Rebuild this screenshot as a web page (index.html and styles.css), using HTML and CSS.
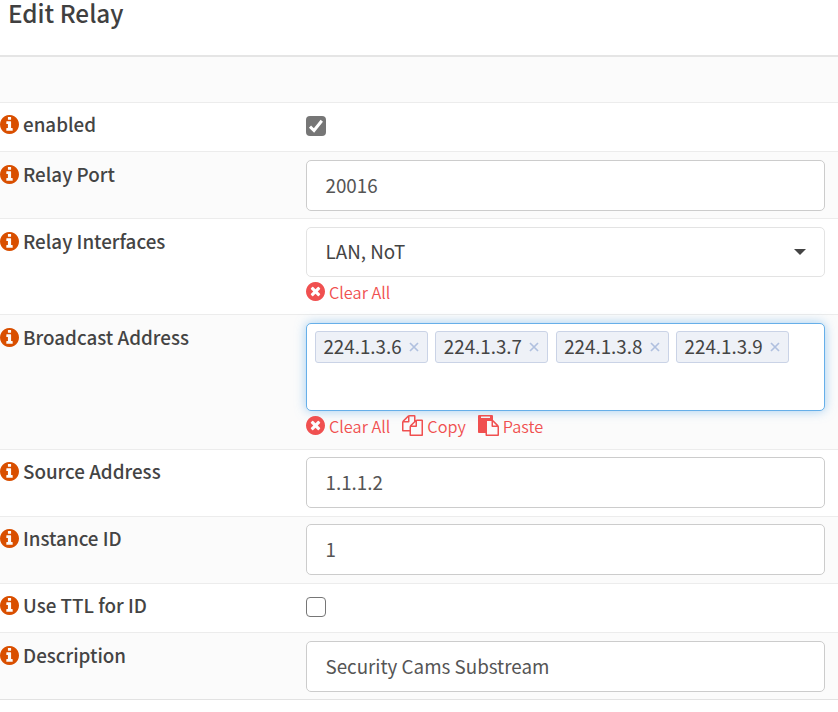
FILE: index.html
```html
<!DOCTYPE html>
<html lang="en">
<head>
<meta charset="utf-8">
<title>Edit Relay</title>
<link rel="stylesheet" href="styles.css">
</head>
<body>
<svg class="defs" aria-hidden="true">
  <symbol id="info" viewBox="128 128 1536 1536"><path d="M1152 1376v-160q0-14-9-23t-23-9h-96v-512q0-14-9-23t-23-9h-320q-14 0-23 9t-9 23v160q0 14 9 23t23 9h96v320h-96q-14 0-23 9t-9 23v160q0 14 9 23t23 9h448q14 0 23-9t9-23zm-128-896v-160q0-14-9-23t-23-9h-192q-14 0-23 9t-9 23v160q0 14 9 23t23 9h192q14 0 23-9t9-23zm640 416q0 209-103 385.500t-279.500 279.500-385.500 103-385.500-103-279.500-279.500-103-385.500 103-385.500 279.500-279.500 385.500-103 385.500 103 279.500 279.500 103 385.500z"/></symbol>
  <symbol id="clear" viewBox="128 128 1536 1536"><path d="M1277 1122q0-26-19-45l-181-181 181-181q19-19 19-45 0-27-19-46l-90-90q-19-19-46-19-26 0-45 19l-181 181-181-181q-19-19-45-19-27 0-46 19l-90 90q-19 19-19 46 0 26 19 45l181 181-181 181q-19 19-19 45 0 27 19 46l90 90q19 19 46 19 26 0 45-19l181-181 181 181q19 19 45 19 27 0 46-19l90-90q19-19 19-46zm387-226q0 209-103 385.500t-279.500 279.500-385.500 103-385.500-103-279.500-279.500-103-385.500 103-385.500 279.500-279.500 385.500-103 385.500 103 279.500 279.500 103 385.500z"/></symbol>
  <symbol id="copy" viewBox="0 0 1792 1792"><path d="M1696 384q40 0 68 28t28 68v1216q0 40-28 68t-68 28h-960q-40 0-68-28t-28-68v-288h-544q-40 0-68-28t-28-68v-672q0-40 20-88t48-76l408-408q28-28 76-48t88-20h416q40 0 68 28t28 68v328q68-40 128-40h416zm-544 213l-299 299h299v-299zm-640-384l-299 299h299v-299zm196 647l316-316v-416h-384v416q0 40-28 68t-68 28h-416v640h512v-256q0-40 20-88t48-76zm956 804v-1152h-384v416q0 40-28 68t-68 28h-416v640h896z"/></symbol>
  <symbol id="paste" viewBox="0 0 1792 1792"><path d="M768 1664h896v-640h-416q-40 0-68-28t-28-68v-416h-384v1152zm256-1440v-64q0-13-9.500-22.500t-22.500-9.500h-704q-13 0-22.500 9.500t-9.500 22.500v64q0 13 9.500 22.500t22.500 9.500h704q13 0 22.500-9.500t9.500-22.500zm256 672h299l-299-299v299zm512 128v672q0 40-28 68t-68 28h-960q-40 0-68-28t-28-68v-160h-544q-40 0-68-28t-28-68v-1344q0-40 28-68t68-28h1088q40 0 68 28t28 68v328q21 13 36 28l408 408q28 28 48 76t20 88z"/></symbol>
</svg>

<header class="header"><h1 class="title">Edit Relay</h1></header>

<main class="form">
  <div class="row row-spacer"></div>

  <div class="row row-check">
    <div class="label"><svg class="info"><use href="#info"/></svg><span>enabled</span></div>
    <div class="field"><span class="check checked"><svg viewBox="0 0 20 20"><path d="M4 10.600 8 14.500 15.800 4.700"/></svg></span></div>
  </div>

  <div class="row row-input">
    <div class="label"><svg class="info"><use href="#info"/></svg><span>Relay Port</span></div>
    <div class="field"><div class="input">20016</div></div>
  </div>

  <div class="row row-select">
    <div class="label"><svg class="info"><use href="#info"/></svg><span>Relay Interfaces</span></div>
    <div class="field">
      <div class="input select"><span>LAN, NoT</span><i class="caret"></i></div>
      <div class="links"><a class="link"><svg class="circle"><use href="#clear"/></svg><span>Clear All</span></a></div>
    </div>
  </div>

  <div class="row row-tags">
    <div class="label"><svg class="info"><use href="#info"/></svg><span>Broadcast Address</span></div>
    <div class="field">
      <div class="tags">
        <div class="tag"><span>224.1.3.6</span><svg class="x" viewBox="0 0 10 10"><path d="M1 1 9 9M9 1 1 9"/></svg></div>
        <div class="tag"><span>224.1.3.7</span><svg class="x" viewBox="0 0 10 10"><path d="M1 1 9 9M9 1 1 9"/></svg></div>
        <div class="tag"><span>224.1.3.8</span><svg class="x" viewBox="0 0 10 10"><path d="M1 1 9 9M9 1 1 9"/></svg></div>
        <div class="tag"><span>224.1.3.9</span><svg class="x" viewBox="0 0 10 10"><path d="M1 1 9 9M9 1 1 9"/></svg></div>
      </div>
      <div class="links">
        <a class="link"><svg class="circle"><use href="#clear"/></svg><span>Clear All</span></a>
        <a class="link"><svg class="sheet"><use href="#copy"/></svg><span>Copy</span></a>
        <a class="link"><svg class="sheet"><use href="#paste"/></svg><span>Paste</span></a>
      </div>
    </div>
  </div>

  <div class="row row-input tight">
    <div class="label"><svg class="info"><use href="#info"/></svg><span>Source Address</span></div>
    <div class="field"><div class="input">1.1.1.2</div></div>
  </div>

  <div class="row row-input tight">
    <div class="label"><svg class="info"><use href="#info"/></svg><span>Instance ID</span></div>
    <div class="field"><div class="input">1</div></div>
  </div>

  <div class="row row-check">
    <div class="label"><svg class="info"><use href="#info"/></svg><span>Use TTL for ID</span></div>
    <div class="field"><span class="check"></span></div>
  </div>

  <div class="row row-input">
    <div class="label"><svg class="info"><use href="#info"/></svg><span>Description</span></div>
    <div class="field"><div class="input">Security Cams Substream</div></div>
  </div>
</main>
</body>
</html>
```
FILE: styles.css
```css
* { box-sizing: border-box; }

body {
  margin: 0;
  background: #fff;
  color: #444;
  font-family: "Noto Sans CJK SC", "Noto Sans", sans-serif;
  font-size: 18.8px;
  line-height: 28px;
  overflow: hidden;
}

svg { display: block; flex: none; fill: currentColor; }
.defs { position: absolute; width: 0; height: 0; }

.header {
  height: 57px;
  padding-left: 8px;
  border-bottom: 2px solid #e5e5e5;
}
.title {
  margin: 0;
  font-size: 24.3px;
  font-weight: 500;
  line-height: 26px;
  color: #404040;
}

.form { border-bottom: 1px solid #e2e2e2; }

.row {
  display: grid;
  grid-template-columns: 306px 519px;
  padding-top: 8px;
  border-top: 1px solid #ececec;
}
.row:nth-child(odd) { background: #fbfbfb; }
.row-spacer { height: 45px; border-top: 0; }
.row-check { height: 49px; padding-top: 7px; }
.row-input { height: 67px; }
.row-select { height: 96px; }
.row-tags { height: 135px; }
.tight { padding-top: 7px; }

.label {
  display: flex;
  gap: 4px;
  font-weight: 500;
}
.info {
  width: 19px;
  height: 19px;
  margin-top: 5px;
  color: #d94f00;
}

.input {
  display: flex;
  align-items: center;
  height: 51px;
  padding: 0 18px 1px 18.5px;
  border: 1px solid #ccc;
  border-radius: 5px;
  background: #fff;
  color: #555;
}
.select {
  justify-content: space-between;
  height: 50px;
  padding-bottom: 2px;
  border-color: #e3e3e3;
  color: #444;
}
.caret {
  margin-top: 2px;
  border: 6px solid transparent;
  border-top-color: #444;
  border-bottom: 0;
}

.check {
  display: block;
  width: 20px;
  height: 20px;
  margin-top: 6px;
  border: 1.5px solid #767676;
  border-radius: 4px;
  background: #fff;
}
.checked { border: 0; background: #767676; }
.checked path { fill: none; stroke: #fff; stroke-width: 3; }

.links {
  display: flex;
  gap: 12px;
  margin-top: 1px;
  color: #f05050;
  font-size: 16.3px;
  font-weight: 350;
}
.link { display: flex; gap: 4px; }
.circle { width: 19px; height: 19px; margin-top: 4px; }
.sheet { width: 21px; height: 21px; margin-top: 3px; }

.tags {
  display: flex;
  align-items: flex-start;
  gap: 7.400px;
  height: 88px;
  padding: 7px 8px;
  border: 1px solid #66afe9;
  border-radius: 5px;
  background: #fff;
  box-shadow: 0 0 11px rgba(102, 175, 233, .6);
}
.tag {
  display: flex;
  align-items: center;
  justify-content: space-between;
  width: 113px;
  height: 32px;
  padding: 0 8px 2px 7.400px;
  border: 1px solid #cad3e6;
  border-radius: 3px;
  background: #eef1f7;
}
.x { width: 10px; height: 10px; margin-top: 2px; fill: none; stroke: #b0c0df; stroke-width: 1.700; }
```
